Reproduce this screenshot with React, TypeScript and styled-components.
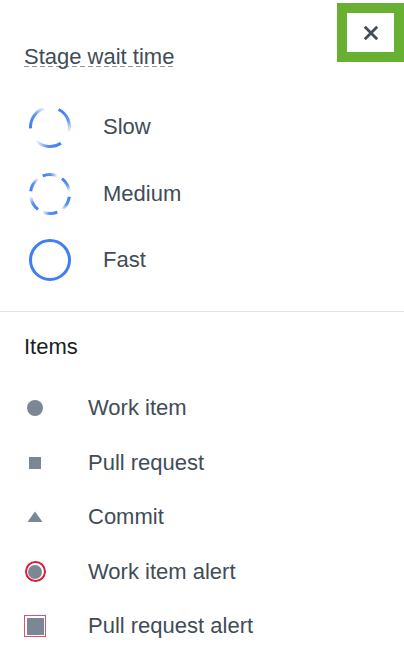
import React, { useId } from "react";
import styled, { createGlobalStyle } from "styled-components";

const GlobalStyle = createGlobalStyle`
  html, body {
    margin: 0;
    padding: 0;
    background: #ffffff;
  }
  body {
    font-family: "Liberation Sans", Arial, Helvetica, sans-serif;
  }
`;

const Panel = styled.div`
  position: relative;
  width: 404px;
  height: 670px;
  background: #ffffff;
  overflow: hidden;
`;

const CloseButton = styled.button`
  position: absolute;
  top: 3px;
  right: 0;
  width: 67px;
  height: 59px;
  box-sizing: border-box;
  border: 10px solid #68b031;
  background: #ffffff;
  padding: 0;
  display: flex;
  align-items: center;
  justify-content: center;
  cursor: pointer;
`;

const Section = styled.section`
  padding: 0 24px;
`;

const Title = styled.h2<{ dark?: boolean }>`
  margin: ${({ dark }) => (dark ? "21.5px 0 0" : "43.5px 0 0")};
  font-size: 22px;
  line-height: 26px;
  font-weight: 400;
  color: ${({ dark }) => (dark ? "#1a1e22" : "#414c57")};
`;

const Dotted = styled.span`
  background-image: repeating-linear-gradient(
    to right,
    #8e98a2 0 5px,
    transparent 5px 8px
  );
  background-repeat: no-repeat;
  background-size: 100% 1px;
  background-position: 0 calc(100% - 2px);
`;

const StageList = styled.ul`
  list-style: none;
  margin: 35.5px 0 0;
  padding: 0 0 0 4px;
  display: flex;
  flex-direction: column;
  gap: 22.5px;
`;

const StageRow = styled.li`
  display: flex;
  align-items: center;
  height: 44px;
  gap: 31px;
  font-size: 22px;
  color: #414c57;
`;

const Divider = styled.hr`
  margin: 29px 0 0;
  border: none;
  height: 1px;
  background: #e2e2e2;
`;

const ItemList = styled.ul`
  list-style: none;
  margin: 33.5px 0 0;
  padding: 0;
  display: flex;
  flex-direction: column;
  gap: 24.5px;
`;

const ItemRow = styled.li`
  display: flex;
  align-items: center;
  height: 30px;
  gap: 42px;
  font-size: 22px;
  color: #414c57;
`;

const IconBox = styled.span`
  width: 22px;
  height: 22px;
  display: flex;
  align-items: center;
  justify-content: center;
  flex: none;
`;

const Dot = styled.span<{ size: number; round?: boolean }>`
  width: ${({ size }) => size}px;
  height: ${({ size }) => size}px;
  border-radius: ${({ round }) => (round ? "50%" : "0")};
  background: #7b8794;
`;

const Alert = styled.span<{ round?: boolean }>`
  box-sizing: border-box;
  width: ${({ round }) => (round ? 21 : 22)}px;
  height: ${({ round }) => (round ? 21 : 22)}px;
  border-radius: ${({ round }) => (round ? "50%" : "0")};
  border: ${({ round }) => (round ? "2px solid #d81e3a" : "1px solid #e0506a")};
  padding: 1.5px;
  display: flex;
  & > span {
    flex: 1;
    border-radius: inherit;
    background: #7b8794;
  }
`;

type Speed = "slow" | "medium" | "fast";

const point = (a: number) => {
  const r = 19.5;
  const rad = (a * Math.PI) / 180;
  return { x: 22 + r * Math.sin(rad), y: 22 - r * Math.cos(rad) };
};

const WaitCircle = ({ speed }: { speed: Speed }) => {
  const id = useId().replace(/:/g, "");
  if (speed === "fast") {
    return (
      <svg width="44" height="44" viewBox="0 0 44 44">
        <circle cx="22" cy="22" r="19.5" fill="none" stroke="#3f7ef6" strokeWidth="3" />
      </svg>
    );
  }
  const count = speed === "slow" ? 3 : 6;
  const len = speed === "slow" ? 78 : 44;
  const offset = speed === "slow" ? 26 : -22;
  const arcs = Array.from({ length: count }, (_, i) => {
    const a0 = offset + (i * 360) / count;
    const a1 = a0 + len;
    return { p0: point(a0), p1: point(a1) };
  });
  return (
    <svg width="44" height="44" viewBox="0 0 44 44">
      <defs>
        {arcs.map((arc, i) => (
          <linearGradient
            key={i}
            id={`${id}g${i}`}
            gradientUnits="userSpaceOnUse"
            x1={arc.p0.x}
            y1={arc.p0.y}
            x2={arc.p1.x}
            y2={arc.p1.y}
          >
            <stop offset="0" stopColor="#3f7ef6" stopOpacity="1" />
            <stop offset="0.55" stopColor="#3f7ef6" stopOpacity="0.85" />
            <stop offset="1" stopColor="#3f7ef6" stopOpacity="0.05" />
          </linearGradient>
        ))}
      </defs>
      {arcs.map((arc, i) => (
        <path
          key={i}
          d={`M ${arc.p0.x} ${arc.p0.y} A 19.5 19.5 0 0 1 ${arc.p1.x} ${arc.p1.y}`}
          fill="none"
          stroke={`url(#${id}g${i})`}
          strokeWidth="3"
        />
      ))}
    </svg>
  );
};

const Triangle = () => (
  <svg width="16" height="12" viewBox="0 0 16 12">
    <path d="M8 0.5 L15.5 11 L0.5 11 Z" fill="#7b8794" />
  </svg>
);

const stages: { speed: Speed; label: string }[] = [
  { speed: "slow", label: "Slow" },
  { speed: "medium", label: "Medium" },
  { speed: "fast", label: "Fast" },
];

const items: { label: string; icon: React.ReactNode }[] = [
  { label: "Work item", icon: <Dot size={16} round /> },
  { label: "Pull request", icon: <Dot size={12} /> },
  { label: "Commit", icon: <Triangle /> },
  { label: "Work item alert", icon: <Alert round><span /></Alert> },
  { label: "Pull request alert", icon: <Alert><span /></Alert> },
];

export default function App() {
  return (
    <>
      <GlobalStyle />
      <Panel>
        <CloseButton aria-label="Close">
          <svg width="16" height="16" viewBox="0 0 16 16">
            <path d="M1.8 1.8 L14.2 14.2 M14.2 1.8 L1.8 14.2" stroke="#434d58" strokeWidth="2.8" />
          </svg>
        </CloseButton>
        <Section>
          <Title>
            <Dotted>Stage wait time</Dotted>
          </Title>
          <StageList>
            {stages.map((s) => (
              <StageRow key={s.speed}>
                <WaitCircle speed={s.speed} />
                <span>{s.label}</span>
              </StageRow>
            ))}
          </StageList>
        </Section>
        <Divider />
        <Section>
          <Title dark>Items</Title>
          <ItemList>
            {items.map((it) => (
              <ItemRow key={it.label}>
                <IconBox>{it.icon}</IconBox>
                <span>{it.label}</span>
              </ItemRow>
            ))}
          </ItemList>
        </Section>
      </Panel>
    </>
  );
}
